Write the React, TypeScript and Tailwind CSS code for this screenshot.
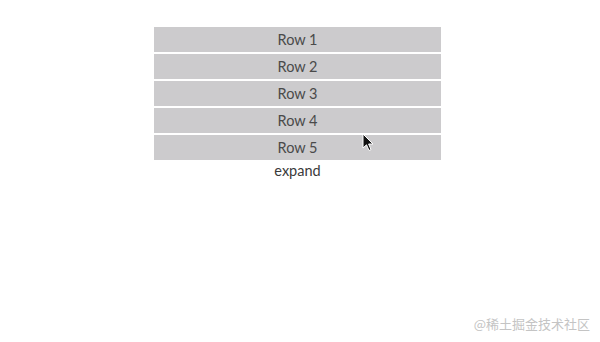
const rows = ["Row 1", "Row 2", "Row 3", "Row 4", "Row 5"];

export default function App() {
  return (
    <div className="relative h-[342px] w-[600px] overflow-hidden bg-white font-['Lato','Liberation_Sans',sans-serif] text-[#4a4a4a]">
      <div className="ml-[154px] flex w-[287px] flex-col pt-[27px]">
        <div className="flex flex-col gap-[2px]">
          {rows.map((r) => (
            <div key={r} className="flex h-[25px] items-center justify-center bg-[#cccbcd] text-[14.5px]">
              {r}
            </div>
          ))}
        </div>
        <div className="flex h-[22px] items-center justify-center text-[14.5px] text-[#3a3a3a]">expand</div>
      </div>

      {/* mouse pointer */}
      <svg className="absolute left-[362px] top-[133px]" width="12" height="19" viewBox="0 0 12 19">
        <path d="M1 1 L1 15 L4.5 11.8 L7 17.5 L9 16.6 L6.6 11 L11 11 Z" fill="#111" stroke="#fff" strokeWidth="1" strokeLinejoin="round" />
      </svg>

      <div className="absolute bottom-[9px] right-[10px] font-['Noto_Sans_CJK_SC','Noto_Sans',sans-serif] text-[13px] text-[#c4c4c4]">
        @稀土掘金技术社区
      </div>
    </div>
  );
}
